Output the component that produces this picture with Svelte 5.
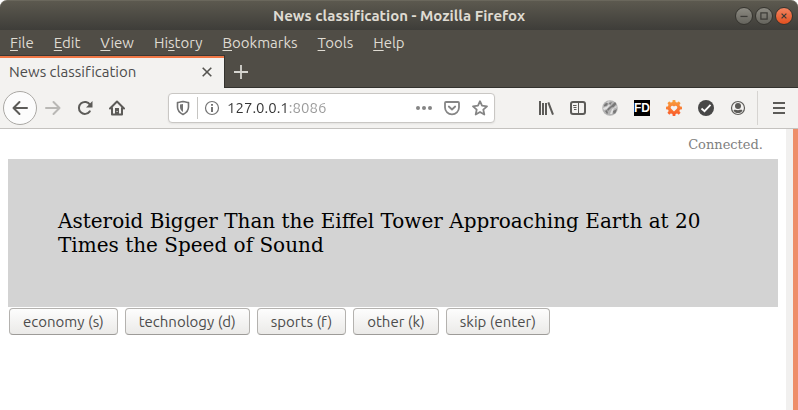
<script>
  const menus = [
    ['', 'F', 'ile'],
    ['', 'E', 'dit'],
    ['', 'V', 'iew'],
    ['Hi', 's', 'tory'],
    ['', 'B', 'ookmarks'],
    ['', 'T', 'ools'],
    ['', 'H', 'elp']
  ];
  const classes = ['economy (s)', 'technology (d)', 'sports (f)', 'other (k)', 'skip (enter)'];
  const teeth = [0, 45, 90, 135, 180, 225, 270, 315];
  let address = $state('127.0.0.1:8086');
</script>

<div class="window">
  <header class="titlebar">
    <span class="title">News classification - Mozilla Firefox</span>
    <div class="controls">
      <button aria-label="Minimize"><svg viewBox="0 0 18 18"><path d="M5 9.5h8" /></svg></button>
      <button aria-label="Maximize"><svg viewBox="0 0 18 18"><rect x="5.5" y="5.5" width="7" height="7" /></svg></button>
      <button class="close" aria-label="Close"><svg viewBox="0 0 18 18"><path d="M6.3 6.3l5.4 5.4M11.7 6.3l-5.4 5.4" /></svg></button>
    </div>
  </header>

  <nav class="menubar">
    {#each menus as [before, key, after]}
      <button>{before}<u>{key}</u>{after}</button>
    {/each}
  </nav>

  <div class="tabs">
    <div class="tab">
      <span>News classification</span>
      <button aria-label="Close tab"><svg width="10" height="10" viewBox="0 0 10 10"><path d="M.7.7l8.600 8.600M9.300.7L.7 9.300" fill="none" stroke="#555450" stroke-width="1.600" /></svg></button>
    </div>
    <button class="newtab" aria-label="New tab"><svg width="14" height="14" viewBox="0 0 14 14"><path d="M7 0v14M0 7h14" stroke="#d6d5d0" stroke-width="1.800" /></svg></button>
  </div>

  <div class="toolbar">
    <button class="tool back" aria-label="Back">
      <svg viewBox="0 0 16 16"><path class="line" d="M15 8H1.500M7.500 2L1.500 8l6 6" /></svg>
    </button>
    <button class="tool forward" aria-label="Forward">
      <svg viewBox="0 0 16 16"><path class="line" d="M1 8h13.500M8.500 2l6 6-6 6" /></svg>
    </button>
    <button class="tool" aria-label="Reload">
      <svg viewBox="0 0 16 16"><path class="line" d="M12.800 11.400A6 6 0 1 1 13 4.700" /><path fill="currentColor" d="M15.500 1v6.500H9z" /></svg>
    </button>
    <button class="tool" aria-label="Home">
      <svg viewBox="0 0 16 16"><path class="line" d="M1 8.500L8 1.500l7 7M3 7.500V14.500h10V7.500" /><path fill="currentColor" d="M6 8h4v7H6z" /><path fill="#f3f2f0" d="M7.600 11h1v1h-1z" /></svg>
    </button>

    <div class="urlbar">
      <svg class="shield" width="14" height="16" viewBox="0 0 14 16"><path fill="none" stroke="#737373" stroke-width="1.600" stroke-linejoin="round" d="M7 1.500C9 2 11 2.200 12.500 2.500V7c0 3.500-2.500 6-5.500 7.500C4 13 1.500 10.500 1.500 7V2.500C3 2.200 5 2 7 1.500z" /><path fill="#737373" d="M7 4v8C5 10.800 4 9 4 7V4.600z" /></svg>
      <i class="rule"></i>
      <svg class="info" width="16" height="16" viewBox="0 0 16 16"><circle cx="8" cy="8" r="6.500" fill="none" stroke="#737373" stroke-width="1.200" /><path fill="#737373" d="M7 4h2v1.800H7zM7 7h2v5H7z" /></svg>
      <input aria-label="Address" bind:value={address} spellcheck="false" />
      <button aria-label="Page actions"><svg viewBox="0 0 16 16" fill="#858585"><circle cx="2" cy="8" r="2" /><circle cx="8" cy="8" r="2" /><circle cx="14" cy="8" r="2" /></svg></button>
      <button aria-label="Save to Pocket"><svg viewBox="0 0 16 16" fill="none" stroke="#858585" stroke-width="1.800" stroke-linecap="round" stroke-linejoin="round"><path d="M2 2h12a1 1 0 0 1 1 1v4.500a7 6.800 0 0 1-14 0V3a1 1 0 0 1 1-1zM4.800 6.500L8 9.500l3.200-3" /></svg></button>
      <button aria-label="Bookmark"><svg viewBox="0 0 16 16" fill="none" stroke="#858585" stroke-width="1.800" stroke-linejoin="round"><path d="M8 1.200l2 4.500 5 .6-3.700 3.300 1 4.900L8 12l-4.300 2.500 1-4.900L1 6.300l5-.6z" /></svg></button>
    </div>

    <button class="tool" aria-label="Library">
      <svg viewBox="0 0 16 16"><path stroke="currentColor" stroke-width="2" fill="none" d="M2 1v14M5 3v12M8 3v12M10.300 2.300L15 14.700" /></svg>
    </button>
    <button class="tool" aria-label="Sidebars">
      <svg viewBox="0 0 16 16"><rect class="line" x="1" y="2" width="14" height="12" rx="2" /><path stroke="currentColor" d="M8.500 2v12M3 5.500h3.500M3.500 7.500H6.500M4 9.500h2.500" fill="none" /></svg>
    </button>
    <button class="tool" aria-label="Globe">
      <svg viewBox="0 0 16 16"><circle cx="8" cy="8" r="7.800" fill="#b4b4b4" /><path fill="#777" d="M2 5l2-2 2 .5-1 2-3 1zM9 6l4-4 1.500 2-3 3-2 .5zM5 9l4-3 1 1-4 4zM3 11l2-1 1 3-1 1zM11 11l4-2-1.500 4-2 1zM7 3l3-1-2 3z" /><path fill="#e2e2e2" d="M1 8l4-1.500 2-2 1 .5-3 4-3 1zM8 14l2-5 2-1-2 6zM5 2l3-1-2 2zM11 9l3-3 1 1z" /></svg>
    </button>
    <button class="tool" aria-label="FD">
      <svg viewBox="0 0 16 16"><rect width="16" height="16" /><text x="8" y="12" text-anchor="middle" fill="#fff" font-family="Liberation Sans, sans-serif" font-size="12" font-weight="700">FD</text></svg>
    </button>
    <button class="tool" aria-label="Favourites">
      <svg viewBox="0 0 16 16">
        <defs><linearGradient id="flame" x2="0" y2="1"><stop stop-color="#f8a33c" /><stop offset="1" stop-color="#fa5729" /></linearGradient></defs>
        <mask id="gear"><circle cx="8" cy="8" r="6.200" fill="#fff" />{#each teeth as angle}<rect x="6.500" y="0" width="3" height="4" rx=".8" fill="#fff" transform="rotate({angle} 8 8)" />{/each}<path d="M8 11.400L5 8.400C3.700 6.700 6.200 4.400 8 6.500c1.800-2.100 4.300.2 3 1.900z" /></mask>
        <rect width="16" height="16" fill="url(#flame)" mask="url(#gear)" />
      </svg>
    </button>
    <button class="tool" aria-label="Checker">
      <svg viewBox="0 0 16 16"><circle cx="8" cy="8" r="8" fill="#484848" /><path d="M3.500 8.500l3 2.700 6-6.400" fill="none" stroke="#fff" stroke-width="1.800" /></svg>
    </button>
    <button class="tool" aria-label="Account">
      <svg viewBox="0 0 16 16"><circle cx="8" cy="8" r="6.500" fill="none" stroke="currentColor" stroke-width="1.200" /><circle cx="8" cy="6" r="3" fill="currentColor" /><path fill="currentColor" d="M3.500 10.200c1.500-.8 2.200 0 4.500 0s3-.8 4.500 0C11.500 12.500 10 13 8 13s-3.500-.5-4.500-2.800z" /></svg>
    </button>
    <i class="divider"></i>
    <button class="tool" aria-label="Open menu">
      <svg viewBox="0 0 16 16"><path stroke="currentColor" stroke-width="2" d="M2 3h12M2 8h12M2 13h12" /></svg>
    </button>
  </div>

  <div class="viewport">
    <main>
      <p class="status">Connected.</p>
      <div class="headline">Asteroid Bigger Than the Eiffel Tower Approaching Earth at 20 Times the Speed of Sound</div>
      <div class="choices">
        {#each classes as label}
          <button>{label}</button>
        {/each}
      </div>
    </main>
    <div class="scrollbar"><div class="thumb"></div></div>
  </div>
</div>

<style>
  :global(body) {
    margin: 0;
    background: #fff;
  }
  .window {
    display: flex;
    flex-direction: column;
    min-height: 100vh;
    font: 15px/20px "Ubuntu", "Noto Sans", sans-serif;
    color: #4c4c4c;
  }
  button {
    font: inherit;
    color: inherit;
    background: none;
    border: 0;
    padding: 0;
    flex: none;
  }
  svg {
    display: block;
    flex: none;
  }
  .titlebar {
    display: grid;
    grid-template-columns: 1fr auto 1fr;
    align-items: center;
    height: 30px;
    box-sizing: border-box;
    padding: 0 5px;
    border-radius: 7px 7px 0 0;
    background: linear-gradient(#5c594f, #3e3d39);
    border-top: 1px solid #6a675c;
    color: #dfdbd2;
  }
  .title {
    grid-column: 2;
    font-weight: 700;
  }
  .title,
  .tab {
    font-variant-ligatures: none;
  }
  .controls {
    display: flex;
    justify-content: flex-end;
    gap: 2px;
  }
  .controls button {
    width: 18px;
    height: 18px;
    box-sizing: border-box;
    border: 1px solid #35342f;
    border-radius: 50%;
    background: linear-gradient(#8c8a82, #65645d);
  }
  .controls .close {
    background: linear-gradient(#f38460, #e2501f);
  }
  .controls svg {
    width: 16px;
    height: 16px;
    fill: none;
    stroke: #3c3b37;
    stroke-width: 1.4;
  }
  .menubar {
    display: flex;
    gap: 20px;
    height: 25px;
    padding: 0 10px;
    background: #504d46;
    color: #dfdbd2;
    line-height: 26px;
  }
  .menubar u {
    text-underline-offset: 2px;
    text-decoration-thickness: 1px;
    text-decoration-skip-ink: none;
  }
  .tabs {
    display: flex;
    height: 33px;
    background: #504d46;
    box-shadow: inset 0 -1px #33322e;
  }
  .tab {
    display: flex;
    align-items: center;
    justify-content: space-between;
    width: 225px;
    box-sizing: border-box;
    padding: 0 12px 0 9px;
    border-top: 1px solid #3a3834;
    border-right: 1px solid #33322e;
    background: #f3f2f0;
    box-shadow: inset 0 2px #f07746;
  }
  .newtab {
    padding: 0 9px;
  }
  .toolbar {
    display: flex;
    align-items: center;
    height: 41px;
    box-sizing: border-box;
    padding: 0 3px 1px;
    background: #f3f2f0;
    border-bottom: 1px solid #c4c2bf;
    color: #5c5b58;
  }
  .tool {
    display: grid;
    place-items: center;
    width: 32px;
    height: 32px;
  }
  .tool svg {
    width: 16px;
    height: 16px;
  }
  .line {
    fill: none;
    stroke: currentColor;
    stroke-width: 2;
    stroke-linecap: round;
    stroke-linejoin: round;
  }
  .back {
    width: 34px;
    height: 34px;
    box-sizing: border-box;
    border: 1px solid #aaa8a4;
    border-radius: 50%;
    background: #fcfcfc;
  }
  .forward {
    color: #b9b8b5;
  }
  .urlbar {
    display: flex;
    align-items: center;
    flex: 1;
    min-width: 0;
    height: 30px;
    box-sizing: border-box;
    margin: 0 35px;
    padding: 0 6px 0 7px;
    border: 1px solid #c9c7c4;
    border-radius: 4px;
    background: #fff;
    box-shadow: 0 1px 2px #0001;
  }
  .rule {
    width: 1px;
    height: 22px;
    margin: 0 6px 0 7px;
    background: #c6c5c2;
  }
  .urlbar input {
    flex: 1;
    min-width: 0;
    height: 24px;
    margin-left: 7px;
    padding: 0;
    border: 0;
    outline: 0;
    font: inherit;
    background: linear-gradient(90deg, #333 62px, #999 62px);
    background-clip: text;
    color: transparent;
    caret-color: #333;
  }
  .urlbar button {
    width: 16px;
    height: 16px;
    margin-left: 12px;
  }
  .divider {
    width: 1px;
    height: 34px;
    margin: 0 5px 0 3px;
    background: #d6d4d1;
  }
  .viewport {
    display: flex;
    flex: 1;
    background: #fff;
  }
  main {
    flex: 1;
    min-width: 0;
    padding: 8px;
  }
  .status {
    margin: 0 15px 6px 0;
    text-align: right;
    font: 13px/16px "DejaVu Serif", serif;
    color: #808080;
  }
  .headline {
    padding: 50px;
    background: #d3d3d3;
    color: #000;
    font: 20px/24px "DejaVu Serif", serif;
  }
  .choices {
    display: flex;
    flex-wrap: wrap;
    gap: 7px;
    padding: 1px;
  }
  .choices button {
    height: 27px;
    box-sizing: border-box;
    padding: 0 13px;
    border: 1px solid #b4b2af;
    border-bottom-color: #9d9b98;
    border-radius: 4px;
    background: linear-gradient(#fdfdfd, #ebeae8);
  }
  .scrollbar {
    display: flex;
    justify-content: flex-end;
    width: 12px;
    background: #f1f0ef;
  }
  .thumb {
    width: 5px;
    background: #ee8e69;
  }
</style>
